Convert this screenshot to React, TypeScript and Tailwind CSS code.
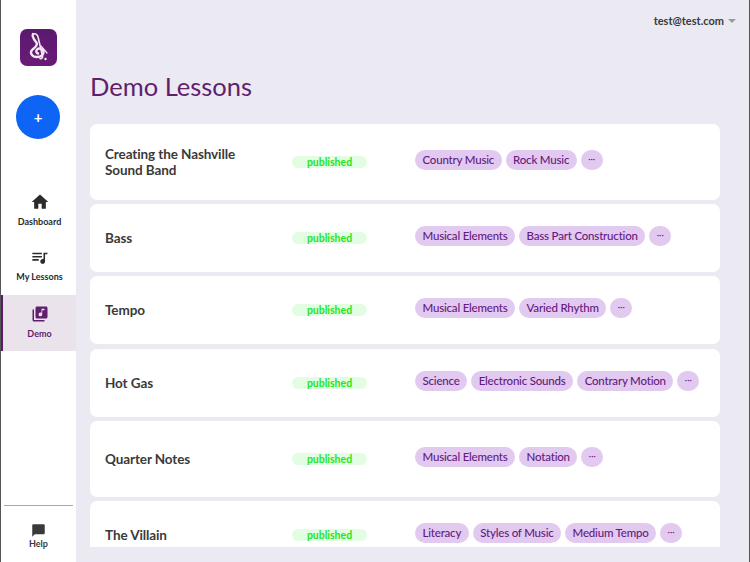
import { MdHome, MdQueueMusic, MdLibraryMusic, MdChatBubble } from "react-icons/md";

const rows = [
  { title: "Creating the Nashville Sound Band", h: "h-[76px]", tags: ["Country Music", "Rock Music"] },
  { title: "Bass", h: "h-[68px]", tags: ["Musical Elements", "Bass Part Construction"] },
  { title: "Tempo", h: "h-[68px] mb-[1px]", tags: ["Musical Elements", "Varied Rhythm"] },
  { title: "Hot Gas", h: "h-[68px]", tags: ["Science", "Electronic Sounds", "Contrary Motion"] },
  { title: "Quarter Notes", h: "h-[76px]", tags: ["Musical Elements", "Notation"] },
  { title: "The Villain", h: "h-[68px]", tags: ["Literacy", "Styles of Music", "Medium Tempo"] },
];

function Logo() {
  return (
    <div className="w-[37px] h-[37px] rounded-[7px] bg-gradient-to-b from-[#5a1a6e] to-[#6b1a78] flex items-center justify-center">
      <svg width="37" height="37" viewBox="0 0 37 37" fill="none" stroke="#f3e9f2" strokeLinecap="round">
        <path d="M13 5c3-1 5 1 5.500 5l4 17c.5 2-1 3-2.500 2.500" strokeWidth="1.600" />
        <path d="M13 5c-1.500 3 1 5.500 3.500 8.500 2 3-2 5-4.500 7.500-2.500 3 0 7 5 7 4 0 7-2 6.500-5.500-.5-3-4.500-4-6.500-2-1.500 1.500-.5 3.500 1 4" strokeWidth="2.400" />
        <path d="M21 17l6 7" strokeWidth="1.200" />
        <circle cx="25.500" cy="30" r="1.200" fill="#f3e9f2" stroke="none" />
      </svg>
    </div>
  );
}

function NavItem({ icon, label, active, h }: { icon: React.ReactNode; label: string; active?: boolean; h: string }) {
  return (
    <div className={`flex flex-col items-center ${h} ${active ? "pt-[8px] bg-[#ebe3ec] border-l-2 border-[#5a1a6e] text-[#5f1f6e]" : "pl-[2px] text-[#2b2b2b]"}`}>
      <div className="h-[22px] flex items-center justify-center">{icon}</div>
      <div className={`text-[9px] leading-[12px] font-bold ${active ? "mt-[3px]" : "mt-[3px]"}`}>{label}</div>
    </div>
  );
}

function Tag({ children }: { children: React.ReactNode }) {
  return (
    <div className="h-[20px] px-[7.500px] shrink-0 rounded-full bg-[#e1c9f0] text-[#661a80] text-[11.500px] tracking-[-0.2px] leading-[20px] font-medium whitespace-nowrap">
      {children}
    </div>
  );
}

export default function App() {
  return (
    <div className="w-[750px] h-[562px] flex overflow-hidden bg-[#ebeaf2] font-['Lato','Noto_Sans',sans-serif] border-l border-r border-[#555555]">
      <aside className="w-[75px] h-full bg-white flex flex-col shrink-0">
        <div className="flex justify-center pt-[29px]"><Logo /></div>
        <div className="flex justify-center mt-[29px] pr-[1px]">
          <div className="w-[44px] h-[44px] rounded-full bg-[#0d64f5] flex items-center justify-center text-white text-[15px] font-bold leading-none">+</div>
        </div>
        <div className="mt-[52px]">
          <NavItem h="h-[55px]" icon={<MdHome size={20} />} label="Dashboard" />
          <NavItem h="h-[49px]" icon={<MdQueueMusic size={19} />} label="My Lessons" />
          <NavItem h="h-[56px]" active icon={<MdLibraryMusic size={18} />} label="Demo" />
        </div>
        <div className="mt-auto mx-[3px] border-t border-[#a9a9a9] h-[57px] flex flex-col items-center pt-[17px] text-[#3a3a3a]">
          <MdChatBubble size={15} />
          <div className="text-[9px] leading-[12px] font-bold">Help</div>
        </div>
      </aside>
      <main className="flex-1 min-w-0 flex flex-col">
        <div className="h-[69px] flex justify-end items-start pt-[14px] pr-[13px] text-[#3a3a3a] text-[11px] leading-[14px] font-bold">
          <span>test@test.com</span>
          <span className="ml-[4px] mt-[5px] w-0 h-0 border-l-[4px] border-r-[4px] border-t-[4px] border-l-transparent border-r-transparent border-t-[#9a9aa0]" />
        </div>
        <h1 className="ml-[14px] text-[25.500px] leading-[34px] font-normal text-[#5f1f6e]">Demo Lessons</h1>
        <div className="mt-[21px] ml-[14px] w-[630px] h-[423px] overflow-hidden flex flex-col gap-[4px]">
          {rows.map((r) => (
            <div key={r.title} className={`${r.h} shrink-0 bg-white rounded-[7px] flex items-center pl-[15px]`}>
              <div className="w-[187px] shrink-0 pr-[30px] text-[#3a3a3a] text-[13.500px] tracking-[-0.1px] leading-[16px] font-bold">{r.title}</div>
              <div className="w-[75px] shrink-0 h-[12px] rounded-full bg-[#e3fde3] text-[#22e622] text-[10.500px] leading-[12px] font-bold text-center">published</div>
              <div className="ml-[48px] flex gap-[4px] mb-[4px]">
                {r.tags.map((t) => <Tag key={t}>{t}</Tag>)}
                <div className="h-[20px] w-[22px] shrink-0 rounded-full bg-[#e1c9f0] text-[#661a80] text-[9px] leading-[18px] font-normal text-center">···</div>
              </div>
            </div>
          ))}
        </div>
      </main>
    </div>
  );
}
